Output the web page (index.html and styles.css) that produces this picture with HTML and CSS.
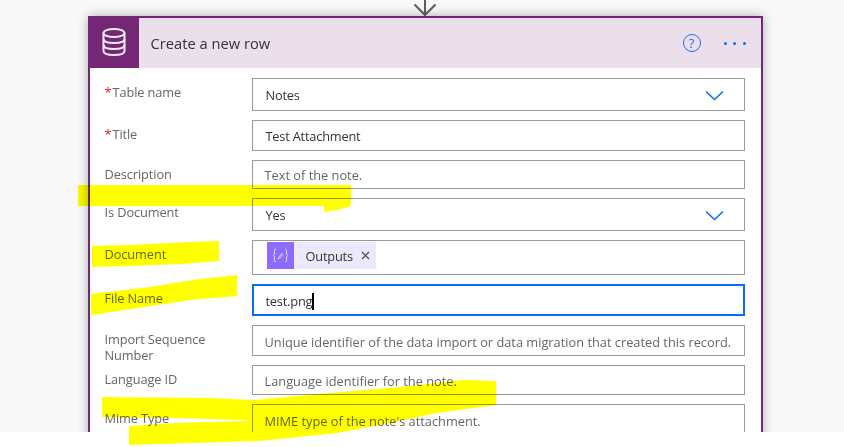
FILE: index.html
```html
<!DOCTYPE html>
<html>

<head>
    <title>Create a new row</title>
    <link rel="stylesheet" href="styles.css">
</head>

<body>
    <div class="canvas">
        <svg class="arrow" width="24" height="16" viewBox="0 0 24 16">
            <path d="M12 15V-4M1.500 4.500L12 15L22.500 4.500" fill="none" stroke="#605e5c" stroke-width="2"></path>
        </svg>
        <div class="card">
            <div class="cardHeader">
                <div class="cardIcon">
                    <svg class="dbIcon" width="26" height="30" viewBox="0 0 26 30" fill="none" stroke="#f3ecf3" stroke-width="2">
                        <ellipse cx="13" cy="6" rx="10.500" ry="4"></ellipse>
                        <path d="M2.500 6V24C2.500 26.500 7 28 13 28C19 28 23.500 26.500 23.500 24V6"></path>
                        <path d="M2.500 12C2.500 14.500 7 16 13 16C19 16 23.500 14.500 23.500 12"></path>
                        <path d="M2.500 18C2.500 20.500 7 22 13 22C19 22 23.500 20.500 23.500 18"></path>
                    </svg>
                </div>
                <div class="cardTitle">Create a new row</div>
                <div class="helpIcon">?</div>
                <div class="moreDots"><span></span><span></span><span></span></div>
            </div>
            <div class="cardBody">
                <div class="row">
                    <div class="label"><span class="req">*</span>Table name</div>
                    <div class="field h33">Notes
                        <svg class="chevron" width="19" height="11" viewBox="0 0 19 11">
                            <path d="M1 1.500L9.500 9.500L18 1.500" fill="none" stroke="#0f6fe8" stroke-width="1.600"></path>
                        </svg>
                    </div>
                </div>
                <div class="row">
                    <div class="label"><span class="req">*</span>Title</div>
                    <div class="field h31">Test Attachment</div>
                </div>
                <div class="row">
                    <div class="label">Description</div>
                    <div class="field h29 hint">Text of the note.</div>
                </div>
                <div class="row">
                    <div class="label">Is Document</div>
                    <div class="field h33">Yes
                        <svg class="chevron" width="19" height="11" viewBox="0 0 19 11">
                            <path d="M1 1.500L9.500 9.500L18 1.500" fill="none" stroke="#0f6fe8" stroke-width="1.600"></path>
                        </svg>
                    </div>
                </div>
                <div class="row">
                    <div class="label">Document</div>
                    <div class="field h35">
                        <div class="token">
                            <div class="tokenIcon">
                                <svg width="17" height="15" viewBox="0 0 17 15" fill="none" stroke="#e4dcff" stroke-width="1">
                                    <path d="M4 1C2 1 2.500 3 2.500 5C2.500 6.500 2 7 1 7.500C2 8 2.500 8.500 2.500 10C2.500 12 2 14 4 14"></path>
                                    <path d="M13 1C15 1 14.500 3 14.500 5C14.500 6.500 15 7 16 7.500C15 8 14.500 8.500 14.500 10C14.500 12 15 14 13 14"></path>
                                    <path d="M6.500 9.500L10 5.500L11 6.500L7.500 10.500L6.200 10.800Z"></path>
                                </svg>
                            </div>
                            <span class="tokenText">Outputs</span>
                            <svg class="tokenClose" width="9" height="9" viewBox="0 0 9 9">
                                <path d="M1 1L8 8M8 1L1 8" stroke="#444" stroke-width="1.100"></path>
                            </svg>
                        </div>
                    </div>
                </div>
                <div class="row">
                    <div class="label">File Name</div>
                    <div class="field h32 focused low">test.png<span class="caret"></span></div>
                </div>
                <div class="row">
                    <div class="label labelLong">Import Sequence Number</div>
                    <div class="field h31 hint low">Unique identifier of the data import or data migration that created this record.</div>
                </div>
                <div class="row">
                    <div class="label">Language ID</div>
                    <div class="field h30 hint low">Language identifier for the note.</div>
                </div>
                <div class="row">
                    <div class="label">Mime Type</div>
                    <div class="field h33 hint">MIME type of the note's attachment.</div>
                </div>
            </div>
        </div>
    </div>

    <!-- marker scribbles on top of the screenshot -->
    <svg class="marker" width="844" height="447" viewBox="0 0 844 447">
        <polygon points="78,185 351,185 351,206 345,208 337,210 324,212 324,206 78,206"></polygon>
        <polygon points="92,246 130,245 190,242 219,241 219,261 180,264 130,266 92,267"></polygon>
        <polygon points="91,294 150,287 200,279 237,275 237,296 190,300 125,310 91,315"></polygon>
        <polygon points="102,397 210,398 253,400 330,393 400,387 463,380 496,381 496,405 437,413 390,423 337,433 260,441 129,445 129,426 175,423 248,421 248,420 170,418 102,417"></polygon>
    </svg>
</body>

</html>
```

FILE: styles.css
```css
html,
body {
    margin: 0;
    height: 447px;
    overflow: hidden;
    background-color: white;
    font-family: 'Open Sans', sans-serif;
    font-size: 12.800px;
    color: #333;
}

body {
    position: relative;
}

.canvas {
    display: flex;
    flex-direction: column;
    align-items: center;
    box-sizing: border-box;
    height: 432px;
    padding-left: 6px;
    overflow: hidden;
    background-color: #f8f8f8;
}

.arrow {
    flex: none;
    display: block;
}

.card {
    flex: none;
    width: 671px;
    border: 2px solid #742774;
    background-color: white;
    box-shadow: 0 0 10px rgba(0, 0, 0, 0.3);
}

.cardHeader {
    display: flex;
    align-items: center;
    height: 50px;
    background-color: #ebdfec;
}

.cardIcon {
    display: flex;
    align-items: center;
    justify-content: center;
    width: 49px;
    height: 100%;
    background-color: #742774;
}

.dbIcon {
    margin-bottom: 2px;
}

.cardTitle {
    flex: 1;
    margin-left: 12px;
    font-size: 14.700px;
    color: #333;
}

.helpIcon {
    width: 16px;
    height: 16px;
    border: 1.500px solid #1a73f0;
    border-radius: 50%;
    color: #1a73f0;
    font-size: 13px;
    line-height: 16px;
    text-align: center;
}

.moreDots {
    display: flex;
    gap: 6.500px;
    margin-left: 23px;
    margin-right: 15px;
}

.moreDots span {
    width: 3px;
    height: 3px;
    border-radius: 50%;
    background-color: #0f6fe8;
}

.cardBody {
    display: flex;
    flex-direction: column;
    gap: 9px;
    padding: 10px 15px 0 15px;
}

.row {
    display: grid;
    grid-template-columns: 147px 493px;
}

.label {
    padding-top: 6px;
    padding-right: 8px;
    line-height: 16px;
    letter-spacing: -0.100px;
    color: #666;
}

/* two line label hangs past its row */
.labelLong {
    margin-bottom: -8px;
}

.req {
    margin-right: 1px;
    color: #e81123;
}

.field {
    display: flex;
    align-items: center;
    box-sizing: border-box;
    padding: 0 13px;
    border: 1px solid #999;
    letter-spacing: -0.200px;
    white-space: nowrap;
}

.hint {
    padding-left: 12px;
    letter-spacing: 0;
    color: #666;
}

.low {
    padding-top: 2px;
}

.h29 {
    height: 29px;
}

.h30 {
    height: 30px;
}

.h31 {
    height: 31px;
}

.h32 {
    height: 32px;
}

.h33 {
    height: 33px;
}

.h35 {
    height: 35px;
}

.focused {
    padding-left: 12px;
    padding-right: 12px;
    border: 2px solid #0a6cff;
}

.caret {
    width: 2px;
    height: 17px;
    background-color: black;
}

.chevron {
    margin-top: 1px;
    margin-left: auto;
    margin-right: 7px;
}

.token {
    display: flex;
    align-items: center;
    align-self: flex-start;
    height: 27px;
    margin-top: 1px;
    margin-left: 1px;
    background-color: #ede9fd;
}

.tokenIcon {
    display: flex;
    align-items: center;
    justify-content: center;
    width: 27px;
    height: 100%;
    background-color: #8c6cff;
}

.tokenText {
    margin-left: 12px;
}

.tokenClose {
    margin-left: 8px;
    margin-right: 6px;
}

.marker {
    position: absolute;
    top: 0;
    left: 0;
    mix-blend-mode: multiply;
    pointer-events: none;
}

.marker polygon {
    fill: #ffff00;
}
```
